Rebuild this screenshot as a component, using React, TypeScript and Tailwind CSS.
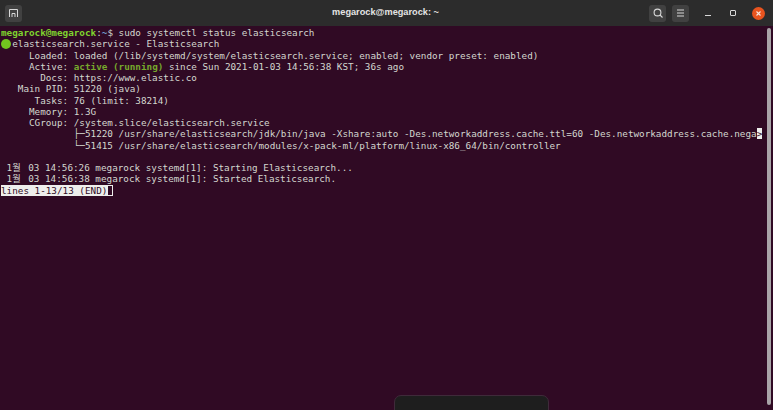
import React from "react";

const Line = ({ children }: { children?: React.ReactNode }) => (
  <div className="h-[11.27px] leading-[11.27px] whitespace-pre">{children || " "}</div>
);

const Wol = () => (
  <span className="inline-block w-[16px]">1월</span>
);

export default function App() {
  return (
    <div className="relative w-[773px] h-[410px] overflow-hidden bg-[#300a24] flex flex-col">
      <div className="h-[26px] shrink-0 bg-[#2c2c2c] grid grid-cols-[1fr_auto_1fr] items-center pl-[5px] pr-[8px] font-['Liberation_Sans',sans-serif]">
        <div className="flex">
          <div className="w-[17px] h-[17px] rounded-[3px] bg-[#414141] flex items-center justify-center">
            <svg width="9" height="9" viewBox="0 0 9 9" fill="none" stroke="#d8d8d8" strokeWidth="1">
              <path d="M0.5 8V0.5H8.5V8" />
              <path d="M3 8V4.5H6V8" />
            </svg>
          </div>
        </div>
        <div className="text-center text-[#e4e4e4] text-[9.2px] font-bold pl-[1px]">megarock@megarock: ~</div>
        <div className="flex items-center justify-end">
          <div className="w-[17px] h-[17px] rounded-[3px] bg-[#414141] flex items-center justify-center">
            <svg width="10" height="10" viewBox="0 0 10 10" fill="none" stroke="#d8d8d8" strokeWidth="1.1">
              <circle cx="4.5" cy="4.5" r="3.4" />
              <path d="M7 7L9.5 9.5" />
            </svg>
          </div>
          <div className="w-[17px] h-[17px] rounded-[3px] bg-[#414141] flex items-center justify-center ml-[6px]">
            <svg width="9" height="8" viewBox="0 0 9 8" fill="none" stroke="#d8d8d8" strokeWidth="1">
              <path d="M1 1H8M1 4H8M1 7H8" />
            </svg>
          </div>
          <div className="w-[18px] flex justify-center ml-[10px]">
            <svg width="8" height="8" viewBox="0 0 8 8" fill="none" stroke="#d8d8d8" strokeWidth="1">
              <path d="M1 6.5H7" />
            </svg>
          </div>
          <div className="w-[18px] flex justify-center ml-[7px]">
            <svg width="8" height="8" viewBox="0 0 8 8" fill="none" stroke="#d8d8d8" strokeWidth="1">
              <rect x="1.5" y="1.5" width="5" height="5" rx="0.5" />
            </svg>
          </div>
          <div className="w-[13px] h-[13px] rounded-full bg-[#e9541f] flex items-center justify-center ml-[10px]">
            <svg width="7" height="7" viewBox="0 0 7 7" fill="none" stroke="#f5e6df" strokeWidth="1.1">
              <path d="M1.5 1.5L5.5 5.5M5.5 1.5L1.5 5.5" />
            </svg>
          </div>
        </div>
      </div>
      <div className="flex-1 flex min-h-0">
        <div className="flex-1 pt-[1px] pl-[1px] text-[9.3px] text-[#d3d7cf] font-['DejaVu_Sans_Mono','Noto_Sans_CJK_KR',monospace] [font-kerning:none]">
          <Line>
            <span className="text-[#7fd32e] font-bold">megarock@megarock</span>:<span className="text-[#729fcf] font-bold">~</span>$ sudo systemctl status elasticsearch
          </Line>
          <Line>
            <span className="inline-flex w-[11.2px] h-[10px] items-center align-top mt-[1px]"><span className="block w-[10px] h-[10px] rounded-full bg-[#72c41f]" /></span>elasticsearch.service - Elasticsearch
          </Line>
          <Line>     Loaded: loaded (/lib/systemd/system/elasticsearch.service; enabled; vendor preset: enabled)</Line>
          <Line>     Active: <span className="text-[#77a82c] font-bold">active (running)</span> since Sun 2021-01-03 14:56:38 KST; 36s ago</Line>
          <Line>       Docs: https://www.elastic.co</Line>
          <Line>   Main PID: 51220 (java)</Line>
          <Line>      Tasks: 76 (limit: 38214)</Line>
          <Line>     Memory: 1.3G</Line>
          <Line>     CGroup: /system.slice/elasticsearch.service</Line>
          <Line>             ├─51220 /usr/share/elasticsearch/jdk/bin/java -Xshare:auto -Des.networkaddress.cache.ttl=60 -Des.networkaddress.cache.nega<span className="bg-[#eeeeec] text-[#300a24]">&gt;</span></Line>
          <Line>             └─51415 /usr/share/elasticsearch/modules/x-pack-ml/platform/linux-x86_64/bin/controller</Line>
          <Line />
          <Line> <Wol /> 03 14:56:26 megarock systemd[1]: Starting Elasticsearch...</Line>
          <Line> <Wol /> 03 14:56:38 megarock systemd[1]: Started Elasticsearch.</Line>
          <Line>
            <span className="bg-[#eeeeec] text-[#300a24]">lines 1-13/13 (END)</span>
            <span className="inline-block w-[5.6px] h-[11px] align-top border border-[#eeeeec]" />
          </Line>
        </div>
        <div className="w-[4px] shrink-0 mr-[2px] mt-[2px] mb-[5px] rounded-full bg-[#a9a4a8]" />
      </div>
      <div className="absolute left-[394px] top-[395px] w-[155px] h-[30px] rounded-[7px] bg-[#1e1e1e] border border-[#3f2a3a]" />
    </div>
  );
}
